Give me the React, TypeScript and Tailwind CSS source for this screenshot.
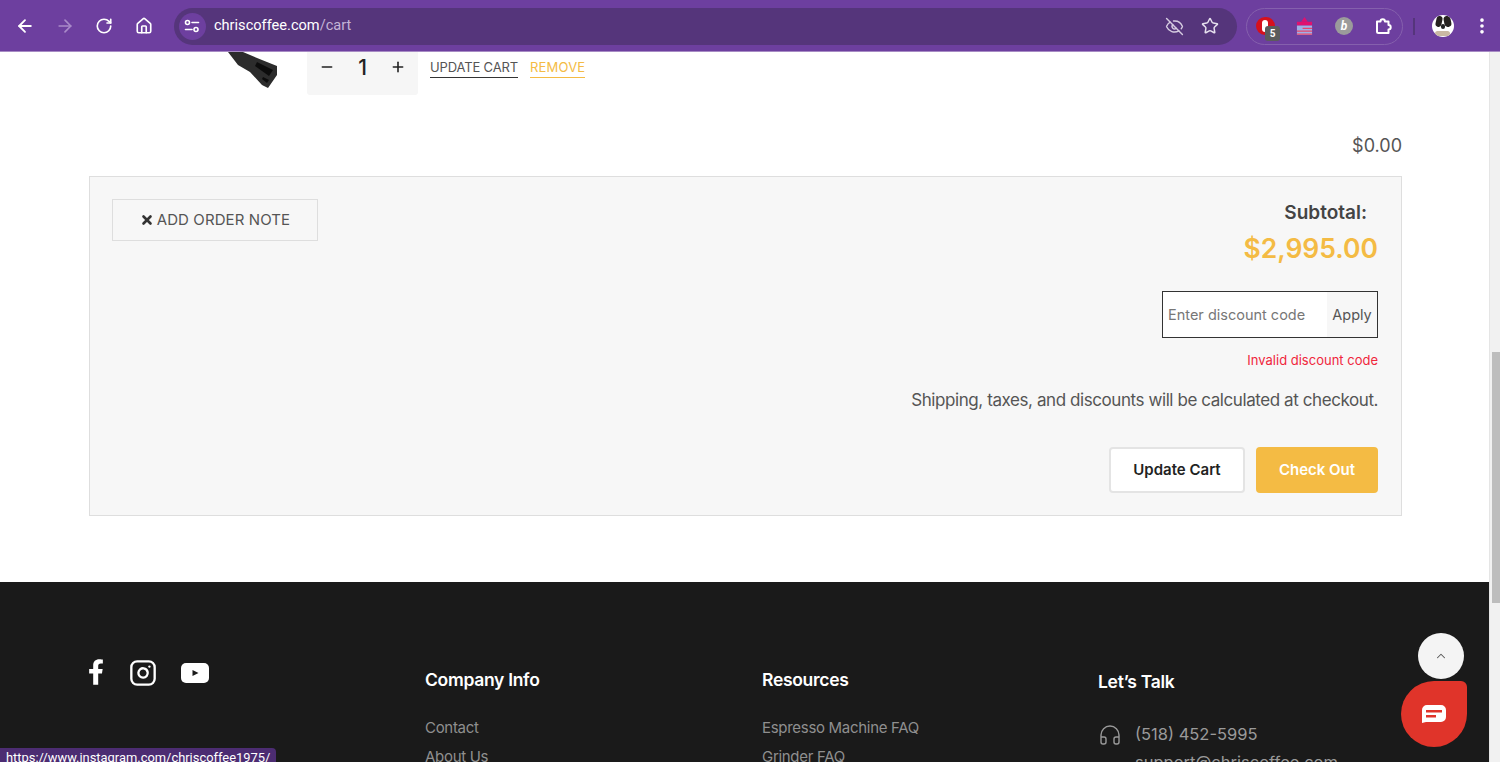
import { ArrowLeft, ArrowRight, RotateCw, House, EyeOff, Star, EllipsisVertical, Headphones, ChevronUp, X, Minus, Plus, Instagram } from "lucide-react";

const FONT = "font-['Inter','Open_Sans',sans-serif]";

function Toolbar() {
  return (
    <header className="h-[52px] shrink-0 flex items-center bg-[#6d3f9f] border-b border-[#a78bc4] pl-[15px] pr-[8px] pt-[1px] font-['Roboto',sans-serif]">
      <ArrowLeft size={20} strokeWidth={2.2} className="text-white" />
      <ArrowRight size={20} strokeWidth={2} className="text-[#a98ac9] ml-[20px]" />
      <RotateCw size={18} strokeWidth={2.2} className="text-white ml-[20px]" />
      <House size={18} strokeWidth={2.2} className="text-white ml-[22px]" />
      <div className="ml-[21px] w-[1064px] h-[37px] rounded-full bg-[#55357b] flex items-center pl-[5px] pr-[18px]">
        <span className="w-[27px] h-[27px] rounded-full bg-[#6d3f9f] flex items-center justify-center">
          <svg viewBox="0 0 16 14" className="w-[16px] h-[14px]" fill="none" stroke="#fff" strokeWidth="1.6" strokeLinecap="round">
            <circle cx="3.5" cy="3.5" r="2" />
            <path d="M8 3.5h6.5M1.5 10.5H8" />
            <circle cx="12" cy="10.5" r="2" />
          </svg>
        </span>
        <span className="ml-[8px] text-[14.6px] text-white">
          chriscoffee.com<span className="text-[#c4b3d6]">/cart</span>
        </span>
        <EyeOff size={19} strokeWidth={1.8} className="text-[#d5cbe0] ml-auto" />
        <Star size={18} strokeWidth={2} className="text-[#e6dfee] ml-[17px]" />
      </div>
      <div className="ml-[9px] w-[157px] h-[37px] rounded-full border border-[#8560ad] flex items-center pl-[9px] relative">
        <span className="relative w-[19px] h-[18px] rounded-full bg-[#d6101c] flex items-center justify-center">
          <span className="w-[6px] h-[12px] rounded-full bg-white -translate-x-[1px]" />
          <span className="absolute left-[9px] top-[9px] w-[15px] h-[15px] rounded-[3px] bg-[#5c5c5c] text-white text-[10px] font-bold flex items-center justify-center">
            5
          </span>
        </span>
        <svg viewBox="0 0 18 20" className="w-[17px] h-[19px] ml-[21px]">
          <path d="M9 0l3.5 5h-7z" fill="#e0116f" />
          <rect x="1" y="5" width="16" height="4" fill="#e0116f" />
          <rect x="1" y="9" width="16" height="10" fill="#9fb0e6" />
          <path d="M7 12h10M1 15h16M1 18h16" stroke="#e8456b" strokeWidth="1.3" />
        </svg>
        <span className="ml-[22px] w-[18px] h-[18px] rounded-full bg-[#9b9b9b] text-white text-[12px] italic font-bold flex items-center justify-center">
          b
        </span>
        <svg viewBox="0 0 18 18" className="w-[18px] h-[18px] ml-[22px]" fill="none" stroke="#fff" strokeWidth="2" strokeLinejoin="round">
          <path d="M2 4.5h3.5a2.2 2.2 0 014.4 0h3.6V8a2.2 2.2 0 010 4.4v3.6H3.5A1.5 1.5 0 012 14.5z" />
        </svg>
      </div>
      <span className="ml-[10px] w-[2px] h-[17px] bg-[#55357b]" />
      <span className="ml-[17px] w-[22px] h-[22px] rounded-full bg-white relative overflow-hidden">
        <span className="absolute left-[4px] top-[1px] w-[6px] h-[11px] rounded-full bg-[#26221f] rotate-12" />
        <span className="absolute left-[12px] top-[1px] w-[7px] h-[11px] rounded-full bg-[#26221f] -rotate-12" />
        <span className="absolute left-[9px] top-[9px] w-[4px] h-[5px] rounded-full bg-[#222]" />
        <span className="absolute left-[3px] top-[16px] w-[15px] h-[5px] rounded-full bg-[#c9b8a3]" />
      </span>
      <EllipsisVertical size={20} strokeWidth={2.4} className="text-white ml-[18px]" />
    </header>
  );
}

function CartRow() {
  return (
    <div className="h-[124px] shrink-0 pl-[89px] pr-[87px] flex flex-col">
      <div className="flex items-start h-[43px]">
        <div className="w-[195px] h-[43px] flex justify-end pr-[3px] overflow-hidden">
          <svg viewBox="0 0 60 40" className="w-[60px] h-[40px]">
            <path d="M7 0L22 0 41 8 56 14 56 23 47 36 41 33 29 20 17 13z" fill="#2c2c2c" />
            <path d="M36 10L52 18 48 24 34 14z" fill="#0c0c0c" />
            <path d="M42 25l6 3-2 3-5-4z" fill="#0c0c0c" />
          </svg>
        </div>
        <div className="ml-[23px] w-[111px] h-[43px] bg-[#f6f6f6] rounded-b-[3px] flex items-center justify-between px-[12px] pb-[13px] text-[#222]">
          <Minus size={16} strokeWidth={2.4} />
          <span className={`${FONT} text-[21px] leading-none font-medium`}>1</span>
          <Plus size={16} strokeWidth={2.4} />
        </div>
        <a className={`${FONT} ml-[12px] mt-[5px] text-[13px] leading-[20px] text-[#555] border-b border-[#333] tracking-[-0.15px]`}>
          UPDATE CART
        </a>
        <a className={`${FONT} ml-[12px] mt-[5px] text-[13px] leading-[20px] text-[#f4bb44] border-b border-[#f4bb44] tracking-[0.2px]`}>
          REMOVE
        </a>
      </div>
      <div className={`${FONT} text-right text-[18px] text-[#555] mt-[39px] leading-[24px]`}>$0.00</div>
    </div>
  );
}

function OrderBox() {
  return (
    <section className={`${FONT} shrink-0 ml-[89px] mr-[87px] h-[340px] bg-[#f7f7f7] border border-[#dedede] flex justify-between pl-[22px] pr-[23px] py-[22px]`}>
      <button className="w-[206px] h-[42px] border border-[#dedede] flex items-center justify-center gap-[3px] text-[15px] text-[#555] tracking-[0.1px]">
        <X size={14} strokeWidth={4.5} className="text-[#333]" />
        ADD ORDER NOTE
      </button>
      <div className="flex flex-col items-end">
        <div className="text-[19px] font-semibold text-[#444] leading-[24px] mt-[2px] mr-[11px]">Subtotal:</div>
        <div className="text-[26.5px] font-semibold text-[#f4bb44] leading-[36px] mt-[5px]">$2,995.00</div>
        <div className="mt-[25px] w-[216px] h-[47px] border border-[#333] bg-white flex">
          <span className="flex-1 flex items-center pl-[5px] text-[14.5px] text-[#777]">Enter discount code</span>
          <span className="w-[50px] bg-[#f7f7f7] flex items-center justify-center text-[14.5px] text-[#555]">Apply</span>
        </div>
        <div className="mt-[13px] text-[13px] text-[#f0263c] leading-[18px]">Invalid discount code</div>
        <div className="mt-[19px] text-[17px] text-[#555] leading-[24px] tracking-[-0.42px]">
          Shipping, taxes, and discounts will be calculated at checkout.
        </div>
        <div className="mt-[35px] flex gap-[11px]">
          <button className="w-[136px] h-[46px] bg-white border-2 border-[#e4e4e4] rounded-[4px] text-[15px] font-semibold text-[#222]">
            Update Cart
          </button>
          <button className="w-[122px] h-[46px] bg-[#f4bb44] rounded-[4px] text-[15px] font-semibold text-white">
            Check Out
          </button>
        </div>
      </div>
    </section>
  );
}

function Footer() {
  return (
    <footer className={`${FONT} mt-[66px] flex-1 bg-[#1a1a1a] pl-[89px] pt-[76px] grid grid-cols-[336px_337px_336px_1fr]`}>
      <div className="flex items-center h-[30px] text-white">
        <svg viewBox="0 0 320 512" className="h-[26px] w-[16px] -ml-[1px] -mt-[3px]" fill="currentColor">
          <path d="M279 288l14-93h-89v-60c0-25 12-50 52-50h41V6s-37-6-72-6c-73 0-121 44-121 125v70H23v93h81v224h100V288z" />
        </svg>
        <Instagram size={28} strokeWidth={2} className="ml-[25px]" />
        <svg viewBox="0 0 28 20" className="w-[28px] h-[20px] ml-[24px]">
          <rect width="28" height="20" rx="5" fill="#fff" />
          <path d="M11.5 7l6 3-6 3z" fill="#1a1a1a" />
        </svg>
      </div>
      <FooterColumn title="Company Info" links={["Contact", "About Us"]} />
      <FooterColumn title="Resources" links={["Espresso Machine FAQ", "Grinder FAQ"]} />
      <div>
        <h3 className="text-[17.5px] font-semibold text-white leading-[24px] mt-[12px] tracking-[-0.3px]">Let’s Talk</h3>
        <div className="mt-[26px] flex gap-[13px] text-[#9a9a9a]">
          <Headphones size={24} strokeWidth={1.4} className="mt-[3px]" />
          <div className="text-[16.5px] leading-[28px]">
            <div>(518) 452-5995</div>
            <div>support@chriscoffee.com</div>
          </div>
        </div>
      </div>
    </footer>
  );
}

function FooterColumn({ title, links }: { title: string; links: string[] }) {
  return (
    <div>
      <h3 className="text-[17.5px] font-semibold text-white leading-[24px] mt-[10px] tracking-[-0.3px]">{title}</h3>
      <ul className="mt-[21px] text-[15px] text-[#8f8f8f] leading-[29px] tracking-[-0.3px]">
        {links.map((l) => (
          <li key={l}>{l}</li>
        ))}
      </ul>
    </div>
  );
}

export default function App() {
  return (
    <div className="relative w-[1500px] h-[762px] overflow-hidden bg-white flex flex-col">
      <Toolbar />
      <div className="flex-1 flex min-h-0">
        <main className="flex-1 flex flex-col min-w-0">
          <CartRow />
          <OrderBox />
          <Footer />
        </main>
        <div className="w-[11px] bg-[#f1f1f1] border-l border-[#e5e5e5] relative">
          <div className="absolute left-[2px] right-0 top-[300px] h-[251px] bg-[#bdbdbd]" />
        </div>
      </div>

      <button className="absolute left-[1418px] top-[633px] w-[46px] h-[46px] rounded-full bg-[#f4f4f4] flex items-center justify-center text-[#555]">
        <ChevronUp size={14} strokeWidth={1.8} />
      </button>
      <div className="absolute left-[1401px] top-[681px] w-[66px] h-[66px] bg-[#e0342a] rounded-[33px_6px_33px_33px] flex items-center justify-center">
        <svg viewBox="0 0 26 20" className="w-[26px] h-[20px]">
          <path d="M6 1h14a5 5 0 015 5v7a5 5 0 01-5 5H5l-4 1V6a5 5 0 015-5z" fill="#fff" />
          <rect x="5" y="6" width="16" height="2.5" fill="#e0342a" />
          <rect x="5" y="11" width="10" height="2.5" fill="#e0342a" />
        </svg>
      </div>
      <div className="absolute left-0 top-[748px] h-[20px] w-[276px] bg-[#4c2c72] rounded-tr-[4px] pl-[6px] font-['Roboto',sans-serif] text-[12.9px] leading-[19px] text-white">
        https://www.instagram.com/chriscoffee1975/
      </div>
    </div>
  );
}
